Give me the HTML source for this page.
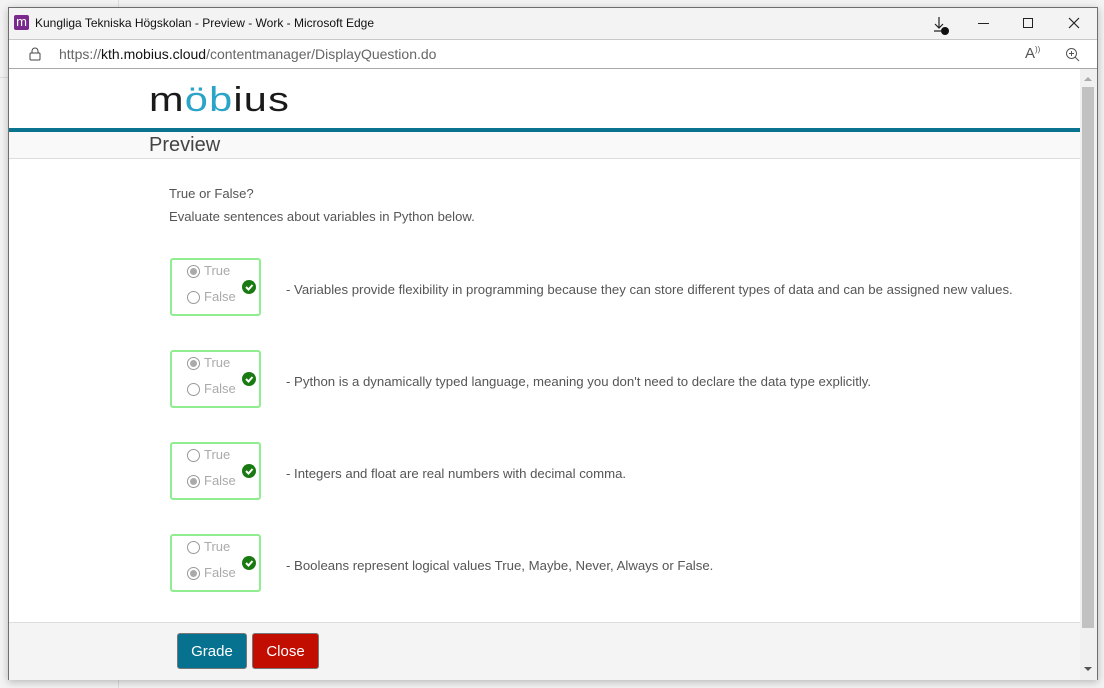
<!DOCTYPE html>
<html><head><meta charset="utf-8"><style>
*{margin:0;padding:0;box-sizing:border-box}
body{width:1104px;height:688px;background:#f3f3f3;position:relative;overflow:hidden;font-family:"Liberation Sans",Arial,sans-serif}
.win{position:absolute;left:8px;top:7px;width:1090px;height:673px;background:#fff;border:1px solid #6e6e6e;box-shadow:0 2px 8px rgba(0,0,0,.25)}
.title{position:absolute;left:0;top:0;width:100%;height:31px;background:#f3f3f3;font-size:12px;color:#111}
.url{position:absolute;left:0;top:31px;width:100%;height:30px;background:#fff;border-top:1px solid #c8c8c8;border-bottom:1px solid #a8a8a8;font-size:14px}
.abs{position:absolute}
.box{position:absolute;left:161px;width:91px;height:58px;border:2px solid #90ee90;border-radius:3px;font-size:13px;color:#aaa}
.rad{position:absolute;left:15px;width:13px;height:13px;border:1px solid #999;border-radius:50%;background:#fff}
.rad.on::after{content:"";position:absolute;left:2px;top:2px;width:7px;height:7px;border-radius:50%;background:#aaa}
.chk{position:absolute;left:70px;top:20px;width:14px;height:14px;border-radius:50%;background:#1a7a12}
.q{position:absolute;left:277px;font-size:13.2px;color:#555}
</style></head><body>
<div class="abs" style="left:118px;top:0;width:1px;height:688px;background:#ddd"></div>
<div class="abs" style="left:0;top:77px;width:8px;height:1px;background:#ddd"></div>
<div class="win">
 <div class="title">
  <div class="abs" style="left:5px;top:7px;width:15px;height:15px;background:#7a2a8c;border-radius:2px;color:#fff;font-size:13px;line-height:13px;text-align:center">m</div>
  <div class="abs" style="left:26px;top:8px">Kungliga Tekniska Högskolan - Preview - Work - Microsoft Edge</div>
  <svg class="abs" style="left:922px;top:7px" width="20" height="20"><path d="M8 2v11M4 9l4 4 4-4M3 16h7" stroke="#222" fill="none" stroke-width="1.2"/><circle cx="14" cy="16" r="4" fill="#111"/></svg>
  <div class="abs" style="left:969px;top:15px;width:11px;height:1px;background:#222"></div>
  <div class="abs" style="left:1014px;top:10px;width:10px;height:10px;border:1px solid #222"></div>
  <svg class="abs" style="left:1059px;top:9px" width="12" height="12"><path d="M1 1l10 10M11 1L1 11" stroke="#222" stroke-width="1.2"/></svg>
 </div>
 <div class="url">
  <svg class="abs" style="left:20px;top:7px" width="12" height="14"><rect x="1" y="6" width="10" height="7" rx="1" fill="none" stroke="#444"/><path d="M3 6V4a3 3 0 0 1 6 0v2" fill="none" stroke="#444"/></svg>
  <div class="abs" style="left:50px;top:6px;color:#666">https://<span style="color:#111">kth.mobius.cloud</span>/contentmanager/DisplayQuestion.do</div>
  <div class="abs" style="left:1016px;top:5px;color:#555;font-size:15px">A<sup style="font-size:8px">))</sup></div>
  <svg class="abs" style="left:1056px;top:7px" width="16" height="16"><circle cx="6.5" cy="6.5" r="5" fill="none" stroke="#555"/><path d="M6.5 4v5M4 6.5h5M10 10l4 4" stroke="#555"/></svg>
 </div>
 <div class="abs" style="left:140px;top:72px;font-size:34px;letter-spacing:1px;color:#1a1a1a;line-height:40px;transform:scaleX(1.22);transform-origin:left">m<span style="color:#2aa4c8">öb</span>ius</div>
 <div class="abs" style="left:0;top:120px;width:1071px;height:4px;background:#0a7390"></div>
 <div class="abs" style="left:0;top:124px;width:1071px;height:27px;background:#f9f9f9;border-bottom:1px solid #ddd"></div>
 <div class="abs" style="left:140px;top:126px;font-size:20px;color:#444">Preview</div>
 <div class="abs" style="left:160px;top:178px;font-size:13.1px;color:#555">True or False?</div>
 <div class="abs" style="left:160px;top:201px;font-size:13.1px;color:#555">Evaluate sentences about variables in Python below.</div>

 <div class="box" style="top:250px"><div class="rad on" style="top:5px"></div><div class="abs" style="left:32px;top:3px">True</div><div class="rad" style="top:31px"></div><div class="abs" style="left:32px;top:29px">False</div><div class="chk"><svg width="14" height="14"><path d="M4 7l2.5 2.5L10.5 5" stroke="#fff" stroke-width="2" fill="none"/></svg></div></div>
 <div class="q" style="top:274px">- Variables provide flexibility in programming because they can store different types of data and can be assigned new values.</div>

 <div class="box" style="top:342px"><div class="rad on" style="top:5px"></div><div class="abs" style="left:32px;top:3px">True</div><div class="rad" style="top:31px"></div><div class="abs" style="left:32px;top:29px">False</div><div class="chk"><svg width="14" height="14"><path d="M4 7l2.5 2.5L10.5 5" stroke="#fff" stroke-width="2" fill="none"/></svg></div></div>
 <div class="q" style="top:366px">- Python is a dynamically typed language, meaning you don't need to declare the data type explicitly.</div>

 <div class="box" style="top:434px"><div class="rad" style="top:5px"></div><div class="abs" style="left:32px;top:3px">True</div><div class="rad on" style="top:31px"></div><div class="abs" style="left:32px;top:29px">False</div><div class="chk"><svg width="14" height="14"><path d="M4 7l2.5 2.5L10.5 5" stroke="#fff" stroke-width="2" fill="none"/></svg></div></div>
 <div class="q" style="top:458px">- Integers and float are real numbers with decimal comma.</div>

 <div class="box" style="top:526px"><div class="rad" style="top:5px"></div><div class="abs" style="left:32px;top:3px">True</div><div class="rad on" style="top:31px"></div><div class="abs" style="left:32px;top:29px">False</div><div class="chk"><svg width="14" height="14"><path d="M4 7l2.5 2.5L10.5 5" stroke="#fff" stroke-width="2" fill="none"/></svg></div></div>
 <div class="q" style="top:550px">- Booleans represent logical values True, Maybe, Never, Always or False.</div>

 <div class="abs" style="left:0;top:614px;width:1071px;height:58px;background:#f4f4f4;border-top:1px solid #ddd"></div>
 <div class="abs" style="left:168px;top:625px;width:70px;height:36px;background:#077190;border:1px solid #777;border-radius:3px;color:#fff;font-size:15px;text-align:center;line-height:36px">Grade</div>
 <div class="abs" style="left:243px;top:625px;width:67px;height:36px;background:#c20e00;border:1px solid #777;border-radius:3px;color:#fff;font-size:15px;text-align:center;line-height:36px">Close</div>

 <div class="abs" style="left:1071px;top:61px;width:17px;height:611px;background:#f0f0f0"></div>
 <div class="abs" style="left:1073px;top:79px;width:12px;height:541px;background:#c1c1c1"></div>
 <div class="abs" style="left:1075px;top:69px;width:0;height:0;border-left:4px solid transparent;border-right:4px solid transparent;border-bottom:4px solid #aaa"></div>
 <div class="abs" style="left:1075px;top:659px;width:0;height:0;border-left:4px solid transparent;border-right:4px solid transparent;border-top:4px solid #555"></div>
</div>
</body></html>
